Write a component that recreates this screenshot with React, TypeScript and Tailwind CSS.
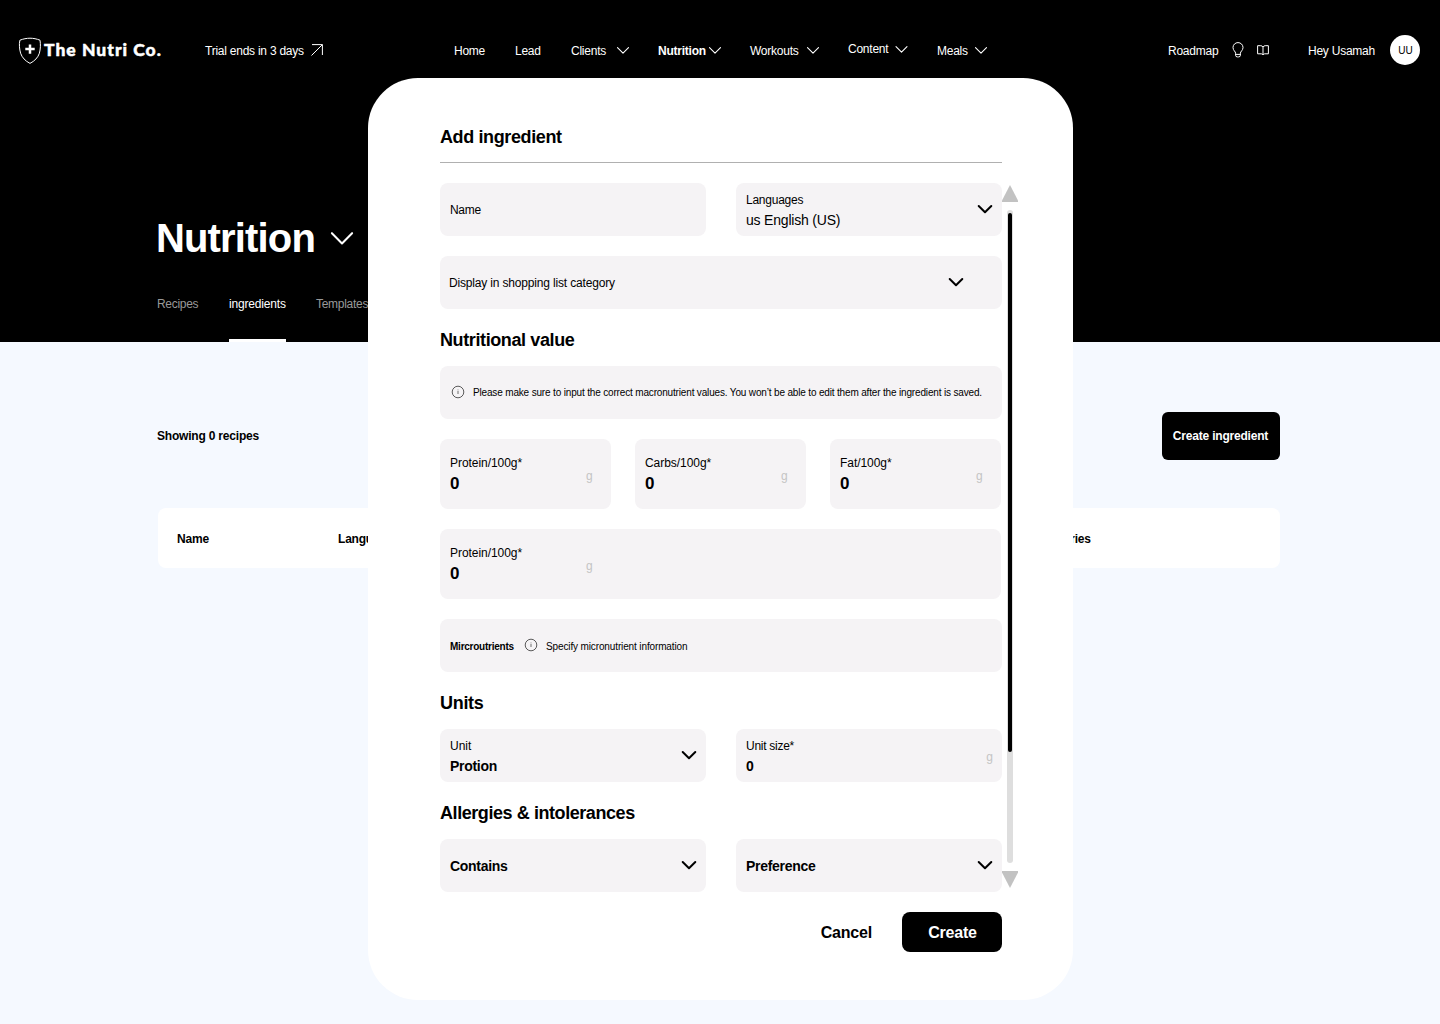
import type { ReactNode } from 'react';

function Chevron({ className, stroke = 1.1 }: { className: string; stroke?: number }) {
  return (
    <svg viewBox="0 0 12 7" fill="none" stroke="currentColor" className={`shrink-0 overflow-visible ${className}`}>
      <path d="M0.5 0.6 6 6.2 11.5 0.6" strokeWidth={stroke} strokeLinecap="round" strokeLinejoin="round" />
    </svg>
  );
}

function FieldChevron() {
  return (
    <svg viewBox="0 0 14 9" fill="none" stroke="black" className="h-[9px] w-3.5 shrink-0 overflow-visible">
      <path d="M0.7 1 7 7.3 13.3 1" strokeWidth="2" strokeLinecap="round" strokeLinejoin="round" />
    </svg>
  );
}

function InfoIcon() {
  return (
    <svg viewBox="0 0 14 14" fill="none" stroke="#333" className="-mt-px h-3.5 w-3.5 shrink-0">
      <circle cx="7" cy="7" r="5.8" strokeWidth="0.8" />
      <path d="M7 6v3" strokeWidth="0.7" />
      <path d="M7 4.6v0.7" strokeWidth="0.7" />
    </svg>
  );
}

function NavItem({ label, className, chevron }: { label: string; className: string; chevron?: string }) {
  return (
    <div className={`flex shrink-0 items-center ${className}`}>
      <span className="flex-1 whitespace-nowrap">{label}</span>
      {chevron && <Chevron className={chevron} />}
    </div>
  );
}

function Box({ className = '', children }: { className?: string; children: ReactNode }) {
  return <div className={`flex rounded-lg bg-[#f5f3f5] ${className}`}>{children}</div>;
}

function SectionTitle({ className = '', children }: { className?: string; children: ReactNode }) {
  return <h3 className={`text-lg leading-6 font-bold ${className}`}>{children}</h3>;
}

function Macro({ label, className }: { label: string; className: string }) {
  return (
    <Box className={`h-[70px] pt-4 pl-2.5 ${className}`}>
      <div className="w-[136px]">
        <div className="text-xs leading-4 tracking-[-0.05px]">{label}</div>
        <div className="mt-[3px] text-[17px] leading-5 font-bold">0</div>
      </div>
      <span className="mt-[13px] text-xs leading-4 text-[#c4c4c4]">g</span>
    </Box>
  );
}

export default function App() {
  return (
    <div className="relative h-[1024px] w-[1440px] overflow-hidden bg-[#f5f9ff] font-['Liberation_Sans',Arial,sans-serif] text-black">
      <header className="flex h-[342px] flex-col bg-black text-white">
        <nav className="mt-[35px] flex h-[30px] shrink-0 items-center pt-px pl-[18px] text-xs leading-4 tracking-[-0.24px]">
          <div className="flex w-[187px] shrink-0 items-center">
            <svg viewBox="0 0 24 28" fill="none" stroke="white" className="h-7 w-6 shrink-0">
              <path
                d="M12 1.2C15.3 1.2 18.8 1.9 22 3.2C22.7 7.3 22.5 12.2 21.4 16.2C20.1 20.4 16.7 24 12 26.4C7.3 24 3.9 20.4 2.6 16.2C1.5 12.2 0.9 7.3 1.9 3.2C5.2 1.9 8.7 1.2 12 1.2Z"
                strokeWidth="1"
              />
              <path d="M12 7.4v9.4M7.3 12.1h9.4" strokeWidth="2.5" />
            </svg>
            <span className="-mt-0.5 ml-[2px] font-['Lato',sans-serif] text-[17.5px] leading-5 font-black tracking-[1.02px] whitespace-nowrap [-webkit-text-stroke:0.45px_white]">
              The Nutri Co.
            </span>
          </div>
          <div className="flex w-[249px] shrink-0 items-center">
            <span className="w-[106px]">Trial ends in 3 days</span>
            <svg viewBox="0 0 12 12" fill="none" stroke="white" className="-mt-0.5 h-3 w-3">
              <path d="M0.5 11.5 11.3 0.7M1 0.6h10.4v10.4" strokeWidth="1" />
            </svg>
          </div>
          <NavItem label="Home" className="w-[61px]" />
          <NavItem label="Lead" className="w-14" />
          <NavItem label="Clients" className="mr-[29px] w-[58px]" chevron="h-[7px] w-3" />
          <NavItem label="Nutrition" className="mr-[29px] w-[63px] font-bold" chevron="h-[7px] w-3" />
          <NavItem label="Workouts" className="mr-[29px] w-[69px]" chevron="h-[7px] w-3" />
          <NavItem label="Content" className="-mt-1 mr-[29px] w-[60px]" chevron="mt-0.5 h-[7px] w-[13px]" />
          <NavItem label="Meals" className="mr-[181px] w-[50px]" chevron="h-[7px] w-3" />
          <span className="w-16 shrink-0">Roadmap</span>
          <svg viewBox="0 0 12 16" fill="none" stroke="white" className="-mt-0.5 h-4 w-3 shrink-0">
            <path
              d="M3.6 11.2C3.6 9.5 1 8.5 1 5.5A5 4.9 0 0 1 11 5.5C11 8.5 8.4 9.5 8.4 11.2V13.2Q8.4 14.9 6.7 14.9H5.3Q3.6 14.9 3.6 13.2ZM3.6 12.4H8.4"
              strokeWidth="1"
            />
          </svg>
          <svg viewBox="0 0 12 11" fill="none" stroke="white" className="ml-[13px] h-[11px] w-3 shrink-0">
            <path
              d="M6 2C5.6 1.2 4.8 0.7 3.8 0.7H0.6V8.8H4.2C5.2 8.8 5.8 9.2 6 10C6.2 9.2 6.8 8.8 7.8 8.8H11.4V0.7H8.2C7.2 0.7 6.4 1.2 6 2ZM6 2V10"
              strokeWidth="1"
            />
          </svg>
          <span className="ml-[39px] w-[82px] shrink-0">Hey Usamah</span>
          <div className="-mt-px flex h-[30px] w-[30px] shrink-0 items-center justify-center rounded-full bg-white pt-0.5 pl-px text-[10px] tracking-normal text-black">
            UU
          </div>
        </nav>
        <div className="mt-[149px] flex items-center gap-[17px] pl-[156px]">
          <h1 className="w-[158px] text-[40px] leading-[48px] font-bold tracking-[-0.85px]">Nutrition</h1>
          <Chevron className="h-[13px] w-[22px]" stroke={1.1} />
        </div>
        <div className="mt-auto flex h-[46px] pl-[157px] text-xs leading-4">
          <span className="w-[72px] tracking-[-0.3px] text-[#999]">Recipes</span>
          <span className="mr-[30px] w-[57px] border-b-[3px] border-white tracking-[-0.17px]">ingredients</span>
          <span className="tracking-[-0.28px] text-[#999]">Templates</span>
        </div>
      </header>

      <main className="pr-[160px] pl-[157px] text-xs leading-4 font-bold tracking-[-0.2px]">
        <div className="mt-[70px] flex h-12 items-center justify-between">
          <span>Showing 0 recipes</span>
          <button className="h-12 w-[118px] rounded-md bg-black pr-px text-white">Create ingredient</button>
        </div>
        <div className="mt-12 ml-px flex h-[60px] items-center rounded-lg bg-white pt-[2px] pl-[19px]">
          <span className="w-[161px]">Name</span>
          <span className="w-[707px]">Languages</span>
          <span>Calories</span>
        </div>
      </main>

      <section className="absolute top-[78px] left-[368px] flex h-[922px] w-[705px] flex-col rounded-[50px] bg-white pt-[47px] pl-[72px]">
        <h2 className="h-[38px] w-[562px] border-b border-[#b0b0b0] text-lg leading-6 font-bold tracking-[-0.38px]">Add ingredient</h2>
        <div className="mt-5 flex">
          <div className="flex w-[562px] flex-col">
            <div className="flex gap-[30px]">
              <Box className="h-[53px] w-[266px] items-center pl-2.5 text-xs leading-4 tracking-[-0.3px]">
                <span className="mt-px">Name</span>
              </Box>
              <Box className="h-[53px] w-[266px] items-start justify-between pt-[9px] pr-2.5 pl-2.5">
                <div>
                  <div className="text-xs leading-4 tracking-[-0.24px]">Languages</div>
                  <div className="mt-0.5 text-sm leading-5 tracking-[-0.2px]">us English (US)</div>
                </div>
                <div className="mt-[13px]"><FieldChevron /></div>
              </Box>
            </div>
            <Box className="mt-5 h-[53px] items-center justify-between pr-[39px] pl-[9px]">
              <span className="mt-px text-xs leading-4 tracking-[-0.17px]">Display in shopping list category</span>
              <FieldChevron />
            </Box>

            <SectionTitle className="mt-[19px] tracking-[-0.39px]">Nutritional value</SectionTitle>
            <Box className="mt-3.5 h-[53px] items-center pl-[11px]">
              <InfoIcon />
              <span className="ml-2 text-[10px] leading-4 tracking-[-0.163px] whitespace-nowrap">
                Please make sure to input the correct macronutrient values. You won’t be able to edit them after the
                ingredient is saved.
              </span>
            </Box>
            <div className="mt-5 flex gap-6">
              <Macro label="Protein/100g*" className="w-[171px]" />
              <Macro label="Carbs/100g*" className="w-[171px]" />
              <Macro label="Fat/100g*" className="w-[171px]" />
            </div>
            <Macro label="Protein/100g*" className="mt-5 w-[561px]" />
            <Box className="mt-5 h-[53px] items-center pl-2.5 text-[10px] leading-4">
              <span className="mt-0.5 w-[74px] font-bold tracking-[-0.24px]">Mircroutrients</span>
              <InfoIcon />
              <span className="mt-0.5 ml-2 tracking-[-0.127px]">Specify micronutrient information</span>
            </Box>

            <SectionTitle className="mt-[19px] tracking-[-0.3px]">Units</SectionTitle>
            <div className="mt-3.5 flex gap-[30px]">
              <Box className="h-[53px] w-[266px] items-start justify-between pt-[9px] pr-2.5 pl-2.5">
                <div>
                  <div className="text-xs leading-4">Unit</div>
                  <div className="mt-0.5 text-sm leading-5 font-bold tracking-[-0.3px]">Protion</div>
                </div>
                <div className="mt-[13px]"><FieldChevron /></div>
              </Box>
              <Box className="h-[53px] w-[266px] items-start justify-between pt-[9px] pr-[9px] pl-2.5">
                <div>
                  <div className="text-xs leading-4 tracking-[-0.27px]">Unit size*</div>
                  <div className="mt-0.5 text-sm leading-5 font-bold">0</div>
                </div>
                <span className="mt-[11px] text-xs leading-4 text-[#c4c4c4]">g</span>
              </Box>
            </div>

            <SectionTitle className="mt-[19px] tracking-[-0.43px]">Allergies &amp; intolerances</SectionTitle>
            <div className="mt-3.5 flex gap-[30px] text-sm leading-5 font-bold tracking-[-0.3px]">
              <Box className="h-[53px] w-[266px] items-center justify-between pr-2.5 pl-2.5">
                <span className="mt-px">Contains</span>
                <FieldChevron />
              </Box>
              <Box className="h-[53px] w-[266px] items-center justify-between pr-2.5 pl-2.5">
                <span className="mt-px">Preference</span>
                <FieldChevron />
              </Box>
            </div>
          </div>

          <div className="flex w-4 flex-col items-center pt-0.5 pb-1">
            <svg viewBox="0 0 16 17" fill="#c2c2c2" className="h-[17px] w-4 shrink-0">
              <path d="M8 0 16 15.5V17H0V15.5Z" />
            </svg>
            <div className="mt-2 flex w-1.5 flex-1 flex-col items-center rounded-full bg-[#dedede] pt-[3px]">
              <div className="h-[539px] w-1 rounded-full bg-black" />
            </div>
            <svg viewBox="0 0 16 17" fill="#c2c2c2" className="mt-2 h-[17px] w-4 shrink-0">
              <path d="M8 17 0 1.5V0H16V1.5Z" />
            </svg>
          </div>
        </div>
        <div className="mt-5 flex w-[562px] items-center justify-end text-base leading-5 font-bold tracking-[-0.2px]">
          <button className="mr-[30px] pt-px">Cancel</button>
          <button className="h-10 w-[100px] rounded-lg bg-black pt-px pl-px text-white">Create</button>
        </div>
      </section>
    </div>
  );
}
